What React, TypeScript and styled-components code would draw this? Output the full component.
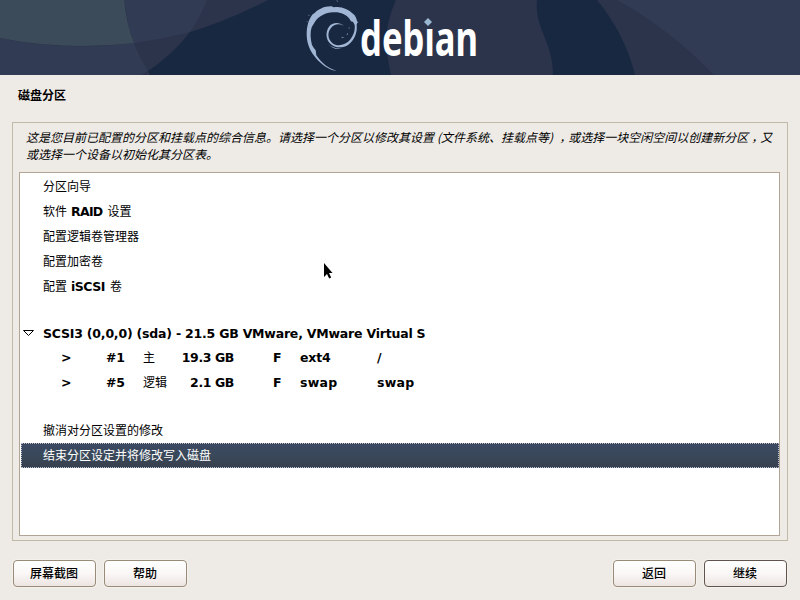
import React from "react";
import styled, { createGlobalStyle } from "styled-components";

const GlobalStyle = createGlobalStyle`
  * { box-sizing: border-box; }
  html, body { margin: 0; padding: 0; background: #eeebe6; }
  body { font-family: "DejaVu Sans", "Noto Sans CJK SC", sans-serif; overflow: hidden; }
`;

const Window = styled.main`
  width: 800px;
  height: 600px;
  display: flex;
  flex-direction: column;
  background: #eeebe6;
  color: #000;
  font-size: 12px;
  overflow: hidden;
  position: relative;
`;

const Banner = styled.header`
  height: 75px;
  flex: none;
  background: #192841;
`;

const BannerArt = styled.svg`
  display: block;
`;

const Title = styled.h1`
  margin: 0;
  height: 47px;
  padding: 11px 18px 0;
  font: 700 12px/18px "Noto Sans CJK SC", sans-serif;
  flex: none;
`;

const Frame = styled.section`
  margin: 0 12px;
  height: 419px;
  flex: none;
  border: 1px solid #c3b9a9;
  padding: 5px 7px 4px 6px;
  display: flex;
  flex-direction: column;
`;

const Description = styled.p`
  margin: 0;
  height: 44px;
  flex: none;
  padding-left: 7px;
  white-space: nowrap;
  font: italic 400 12px/17px "Noto Sans CJK SC", sans-serif;
`;

const Gap = styled.span<{ $w: number }>`
  display: inline-block;
  width: ${(p) => p.$w}px;
`;

const Comma = styled.span`
  font-feature-settings: "halt" 1;
  margin: 0 3px;
`;

const List = styled.div`
  flex: 1;
  border: 1px solid #b1a696;
  background: #fff;
  padding: 1px 0 0 1px;
`;

const Row = styled.div<{ $h?: number; $selected?: boolean }>`
  height: ${(p) => p.$h ?? 25}px;
  padding: 0 0 1px 22px;
  display: flex;
  align-items: center;
  white-space: pre;
  font-family: "Noto Sans CJK SC", sans-serif;
  line-height: 18px;
  ${(p) =>
    p.$selected &&
    `padding-left: 21px; color: #fff; border: 1px dotted #b9c0cb;
     background: linear-gradient(#3c4963, #39495a 50%, #39404e);`}
`;

const Latin = styled.b<{ $before?: number; $after?: number; $tracking?: number }>`
  font: 700 12.5px/18px "DejaVu Sans", sans-serif;
  letter-spacing: ${(p) => p.$tracking ?? 0}px;
  margin-left: ${(p) => p.$before ?? 0}px;
  margin-right: ${(p) => p.$after ?? 0}px;
`;

const MixedLatin = styled(Latin)`
  padding-top: 1px;
`;

const DiskRow = styled(Row)`
  padding: 1px 0 0;
`;

const Expander = styled.svg`
  width: 13px;
  height: 8px;
  margin: 0 8px 2px 1px;
`;

const PartitionRow = styled(Row)`
  display: grid;
  grid-template-columns: 45px 37px 28px 63px 39px 27px 77px 60px;
  padding: 0 0 0 40px;
`;

const Cell = styled.b<{ $right?: boolean; $tracking?: number }>`
  font: 700 12.5px/18px "DejaVu Sans", sans-serif;
  text-align: ${(p) => (p.$right ? "right" : "left")};
  letter-spacing: ${(p) => p.$tracking ?? 0}px;
`;

const Kind = styled.span`
  font: 400 12px/18px "Noto Sans CJK SC", sans-serif;
  padding-bottom: 1px;
`;

const Actions = styled.footer`
  display: flex;
  gap: 8px;
  padding: 19px 13px 0;
`;

const Button = styled.button<{ $default?: boolean }>`
  width: 83px;
  height: 27px;
  padding: 0 1px 1px 0;
  border: 1px solid ${(p) => (p.$default ? "#60554d" : "#988b77")};
  border-radius: 4px;
  background: linear-gradient(#fff, #faf7f6 50%, #ece5e2);
  box-shadow: 0 0 0 1px #f5f2ee;
  color: #000;
  font: 500 12px/18px "Noto Sans CJK SC", sans-serif;
`;

const Spacer = styled.div`
  flex: 1;
`;

const Pointer = styled.svg`
  position: absolute;
  left: 323px;
  top: 263px;
`;

const partitions = [
  { number: "#1", kind: "主", size: "19.3 GB", fs: "ext4", mount: "/" },
  { number: "#5", kind: "逻辑", size: "2.1 GB", fs: "swap", mount: "swap" },
];

export default function App() {
  return (
    <>
      <GlobalStyle />
      <Window>
        <Banner>
          <BannerArt width="800" height="75" viewBox="0 0 800 75">
            <path d="M0 0H268Q227 21 190 32Q171 57 142 75H0Z" fill="#2b344b" />
            <path d="M124 0H207Q201 16 190 32Q163 39 134 43Q127 24 124 0Z" fill="#323b54" />
            <path d="M0 38Q66 52 134 43Q140 59 148 71L142 75H0Z" fill="#323b54" />
            <path d="M148 71L142 75H150Z" fill="#2b344b" />
            <path d="M0 0H124Q126 23 134 43Q66 51 0 38Z" fill="#3c4b5a" />
            <path d="M396 0H537C534 28 553 41 553 75H391C384 43 385 25 396 0Z" fill="#2b344b" />
            <path d="M597 0H800V75H635Q625 34 597 0Z" fill="#2b344b" />
            <path d="M617 0H800V75H714Q671 30 617 0Z" fill="#323b54" />
            <g transform="translate(300 0) scale(.3333)" fill="#a0b6d4">
              <path d="M110 212C92 212 73 199 55 182C38 165 25 145 21 118C18 88 23 62 38 43L44 39C56 27 74 18 95 19L101 22C121 17 145 27 159 41C168 48 170 57 172 67L170 75C173 99 162 121 145 134C128 146 104 144 91 131C77 118 76 96 87 80C97 66 118 65 131 77C117 70 102 72 93 84C82 97 83 116 96 128C111 141 133 136 146 124C160 110 166 92 164 75L159 65C155 67 151 62 149 57C138 42 119 35 99 37C77 38 57 48 45 65L35 82C30 98 31 116 36 135L42 145L47 151L49 166C65 190 86 206 110 212Z" />
              <path d="M84 132Q101 148 126 145Q104 153 84 132Z" />
              <path d="M124 111L134 114L126 114ZM140 103L144 99L142 106ZM146 82L149 84L147 87ZM172 64L175 67L172 70ZM26 44L29 46L26 48ZM20 65L22 62L22 67ZM109 0L114 4L112 5Z" />
            </g>
            <text x="360" y="56" fill="#fff" fontFamily="Noto Sans" fontWeight="700" fontSize="48" textLength="118" lengthAdjust="spacingAndGlyphs">debian</text>
            <rect x="422" y="15" width="12" height="13" fill="#2b344b" />
            <path d="M428 18L432 22L428 26L424 22Z" fill="#9ab8d2" />
          </BannerArt>
        </Banner>
        <Title>磁盘分区</Title>
        <Frame>
          <Description>
            这是您目前已配置的分区和挂载点的综合信息。请选择一个分区以修改其设置<Gap $w={3} />(文件系统、挂载点等)<Gap $w={3} /><Comma>，</Comma>或选择一块空闲空间以创建新分区<Comma>，</Comma>又
            <br />
            或选择一个设备以初始化其分区表。
          </Description>
          <List>
            <Row>分区向导</Row>
            <Row>软件<MixedLatin $before={4} $after={5} $tracking={-0.7}>RAID</MixedLatin>设置</Row>
            <Row>配置逻辑卷管理器</Row>
            <Row>配置加密卷</Row>
            <Row>配置<MixedLatin $before={4} $after={5} $tracking={-0.5}>iSCSI</MixedLatin>卷</Row>
            <Row $h={22} />
            <DiskRow $h={24}>
              <Expander viewBox="0 0 13 8">
                <path d="M1.5 1.5H11.5L6.5 6.5Z" fill="#fff" stroke="#000" />
              </Expander>
              <Latin $tracking={-0.21}>SCSI3 (0,0,0) (sda) - 21.5 GB VMware, VMware Virtual S</Latin>
            </DiskRow>
            {partitions.map((p) => (
              <PartitionRow key={p.number}>
                <Cell>&gt;</Cell>
                <Cell $tracking={-0.3}>{p.number}</Cell>
                <Kind>{p.kind}</Kind>
                <Cell $right $tracking={-0.4}>{p.size}</Cell>
                <Cell />
                <Cell>F</Cell>
                <Cell $tracking={p.fs === "swap" ? 0.3 : -0.2}>{p.fs}</Cell>
                <Cell $tracking={0.3}>{p.mount}</Cell>
              </PartitionRow>
            ))}
            <Row $h={23} />
            <Row>撤消对分区设置的修改</Row>
            <Row $selected>结束分区设定并将修改写入磁盘</Row>
          </List>
        </Frame>
        <Actions>
          <Button>屏幕截图</Button>
          <Button>帮助</Button>
          <Spacer />
          <Button>返回</Button>
          <Button $default>继续</Button>
        </Actions>
        <Pointer width="10" height="17" viewBox="0 0 10 17">
          <path d="M1 0V14L4 11L6.2 15.5L8.2 14.6L6 10H9.5Z" fill="#000" />
        </Pointer>
      </Window>
    </>
  );
}
